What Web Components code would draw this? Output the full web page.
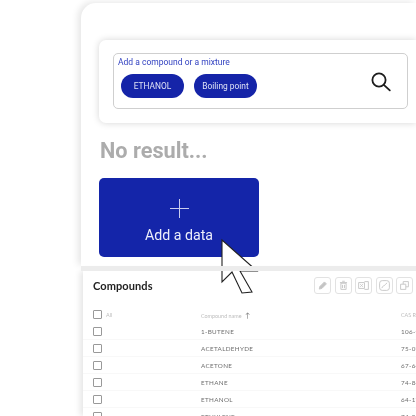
<!DOCTYPE html>
<html lang="en"><head><meta charset="utf-8"><title>Compounds</title>
<style>
html,body{margin:0;padding:0;background:#fff;width:416px;height:416px;overflow:hidden}
body{font-family:Roboto,sans-serif}
</style></head><body>
<app-shell>
  <search-card>
    <data-chip>ETHANOL</data-chip>
    <data-chip>Boiling point</data-chip>
  </search-card>
  <no-result>No result...</no-result>
  <add-button>Add a data</add-button>
  <compound-table></compound-table>
  <click-cursor></click-cursor>
</app-shell>
<script>
function def(name, css, html, init){
  customElements.define(name, class extends HTMLElement{
    constructor(){super();const s=this.attachShadow({mode:'open'});s.innerHTML='<style>'+css+'</style>'+html;if(init)init(s)}
  });
}
def('app-shell',`
:host{display:block;position:relative;width:416px;height:416px;overflow:hidden;box-sizing:border-box;padding:3px 0 0 81px;filter:blur(.4px)}
.panel{width:335px;height:263px;box-sizing:border-box;padding:37px 0 0 18px;background:#fff;border-top-left-radius:15px;box-shadow:-3px -1px 7px rgba(0,0,0,.1);display:flex;flex-direction:column;align-items:flex-start}
.band{position:absolute;left:81px;top:266px;width:335px;height:5px;background:#ececec}
`,`<div class="panel"><slot></slot></div><div class="band"></div>`);

def('search-card',`
:host{display:block;box-sizing:border-box;width:317px;height:83px;background:#fff;border-radius:7px 0 0 7px;padding:13px 8px 14px 14px;box-shadow:0 0 7px rgba(0,0,0,.17)}
.box{position:relative;height:100%;box-sizing:border-box;border:1px solid #cfcfcf;border-radius:5px;padding:3px 0 0 4px;display:flex;flex-direction:column;gap:6px}
.lab{font:8.5px/11px Roboto,sans-serif;color:#2f3fc0}
.chips{display:flex;gap:10px;padding-left:3px}
svg{position:absolute;left:256px;top:17px}
`,`<div class="box"><div class="lab">Add a compound or a mixture</div><div class="chips"><slot></slot></div>
<svg width="22" height="22" viewBox="0 0 22 22" fill="none" stroke="#1c1c1c" stroke-width="1.8"><circle cx="9" cy="9" r="6.6"/><path d="M13.8 13.800 19.800 19.400" stroke-linecap="round"/></svg></div>`);

def('data-chip',`
:host{display:flex;align-items:center;justify-content:center;width:63px;height:24px;border-radius:12px;background:#1524a8;color:#dfe2f6;font:8.4px Roboto,sans-serif;white-space:nowrap}
`,`<slot></slot>`);

def('no-result',`
:host{display:block;margin:14px 0 0 1px;font:700 21.700px/28px Roboto,sans-serif;color:#acacac}
`,`<slot></slot>`);

def('add-button',`
:host{display:flex;flex-direction:column;align-items:center;box-sizing:border-box;width:160px;height:79px;margin-top:13px;padding-top:21px;background:#1425a9;border-radius:5px;color:#eceefa;font:14.200px/18px Roboto,sans-serif}
svg{display:block;margin-bottom:8px}
`,`<svg width="19" height="19" viewBox="0 0 19 19" stroke="#c9cdee" stroke-width="1"><path d="M9.5 0v19M0 9.5h19"/></svg><slot></slot>`);

const rows=[['1-BUTENE','106-98-9'],['ACETALDEHYDE','75-07-0'],['ACETONE','67-64-1'],['ETHANE','74-84-0'],['ETHANOL','64-17-5'],['ETHYLENE','74-85-1']];
const tools=[
 '<path d="M5 15.500l1-4 7-7 3 3-7 7z" fill="#c4c4c4"/>',
 '<path d="M6 6.500h8v9.500H6zM4.500 5.500h11M8 3.500h4M8.500 9v5M11.500 9v5"/>',
 '<path d="M2.500 5.500h9v9h-9zM11.500 4h6v12h-6M5 8l4 4M9 8l-4 4"/>',
 '<rect x="2.500" y="2.500" width="15" height="15" rx="4"/><path d="M6 14c1-4 3-3 4-4s2-3 4-4"/>',
 '<path d="M4 8h8v8H4zM8 8V4h8v8h-4"/>'];
def('compound-table',`
:host{display:block;box-sizing:border-box;position:absolute;left:83px;top:271px;width:333px;height:145px;background:#fff;font-family:Lato,sans-serif;box-shadow:-3px 0 6px rgba(0,0,0,.1)}
.top{display:flex;align-items:center;height:30px;padding-left:10px}
h2{margin:-2px 0 0;font:700 11px Lato,sans-serif;color:#222;letter-spacing:.1px;width:221px;flex:none}
.tools{display:flex;gap:3.500px;margin-top:-1px}
.tools span{display:flex;align-items:center;justify-content:center;width:17px;height:17px;box-sizing:border-box;border:1.500px solid #e2e2e2;border-radius:3px}
.tools svg{width:13px;height:13px;fill:none;stroke:#c8c8c8;stroke-width:1.500}
.row{display:grid;grid-template-columns:108px 200px 40px;align-items:center;height:17px;padding-left:10px;border-bottom:1px solid #f8f8f8;box-sizing:border-box;font-size:6.300px;color:#6e6e6e;letter-spacing:.33px;white-space:nowrap}
.head{font-size:5.400px;color:#bdbdbd;letter-spacing:0;margin-top:5px;border:0}
.cb{display:flex;align-items:center;gap:4px}
.cb i{display:block;width:7px;height:7px;border:1px solid #999;border-radius:1px}
.up{font-size:7px;color:#777;margin-left:2px}
.rows{height:115px;overflow:hidden}
`,`<div class="top"><h2>Compounds</h2><div class="tools">${tools.map(t=>`<span><svg viewBox="0 0 20 20">${t}</svg></span>`).join('')}</div></div>
<div class="rows"><div class="row head"><div class="cb"><i></i>All</div><div>Compound name <span class="up">&#8593;</span></div><div>CAS RN</div></div>
${rows.map(r=>`<div class="row"><div class="cb"><i></i></div><div>${r[0]}</div><div>${r[1]}</div></div>`).join('')}</div>`);

def('click-cursor',`
:host{display:block;position:absolute;left:221px;top:238px;width:38px;height:58px}
`,`<svg width="38" height="58" viewBox="0 0 38 58"><path d="M1 2V44L11 34 21 55 31 54 19 33H36z" fill="#fff" stroke="#222" stroke-width="1.100" stroke-linejoin="miter"/></svg>`);
</script>
</body></html>
